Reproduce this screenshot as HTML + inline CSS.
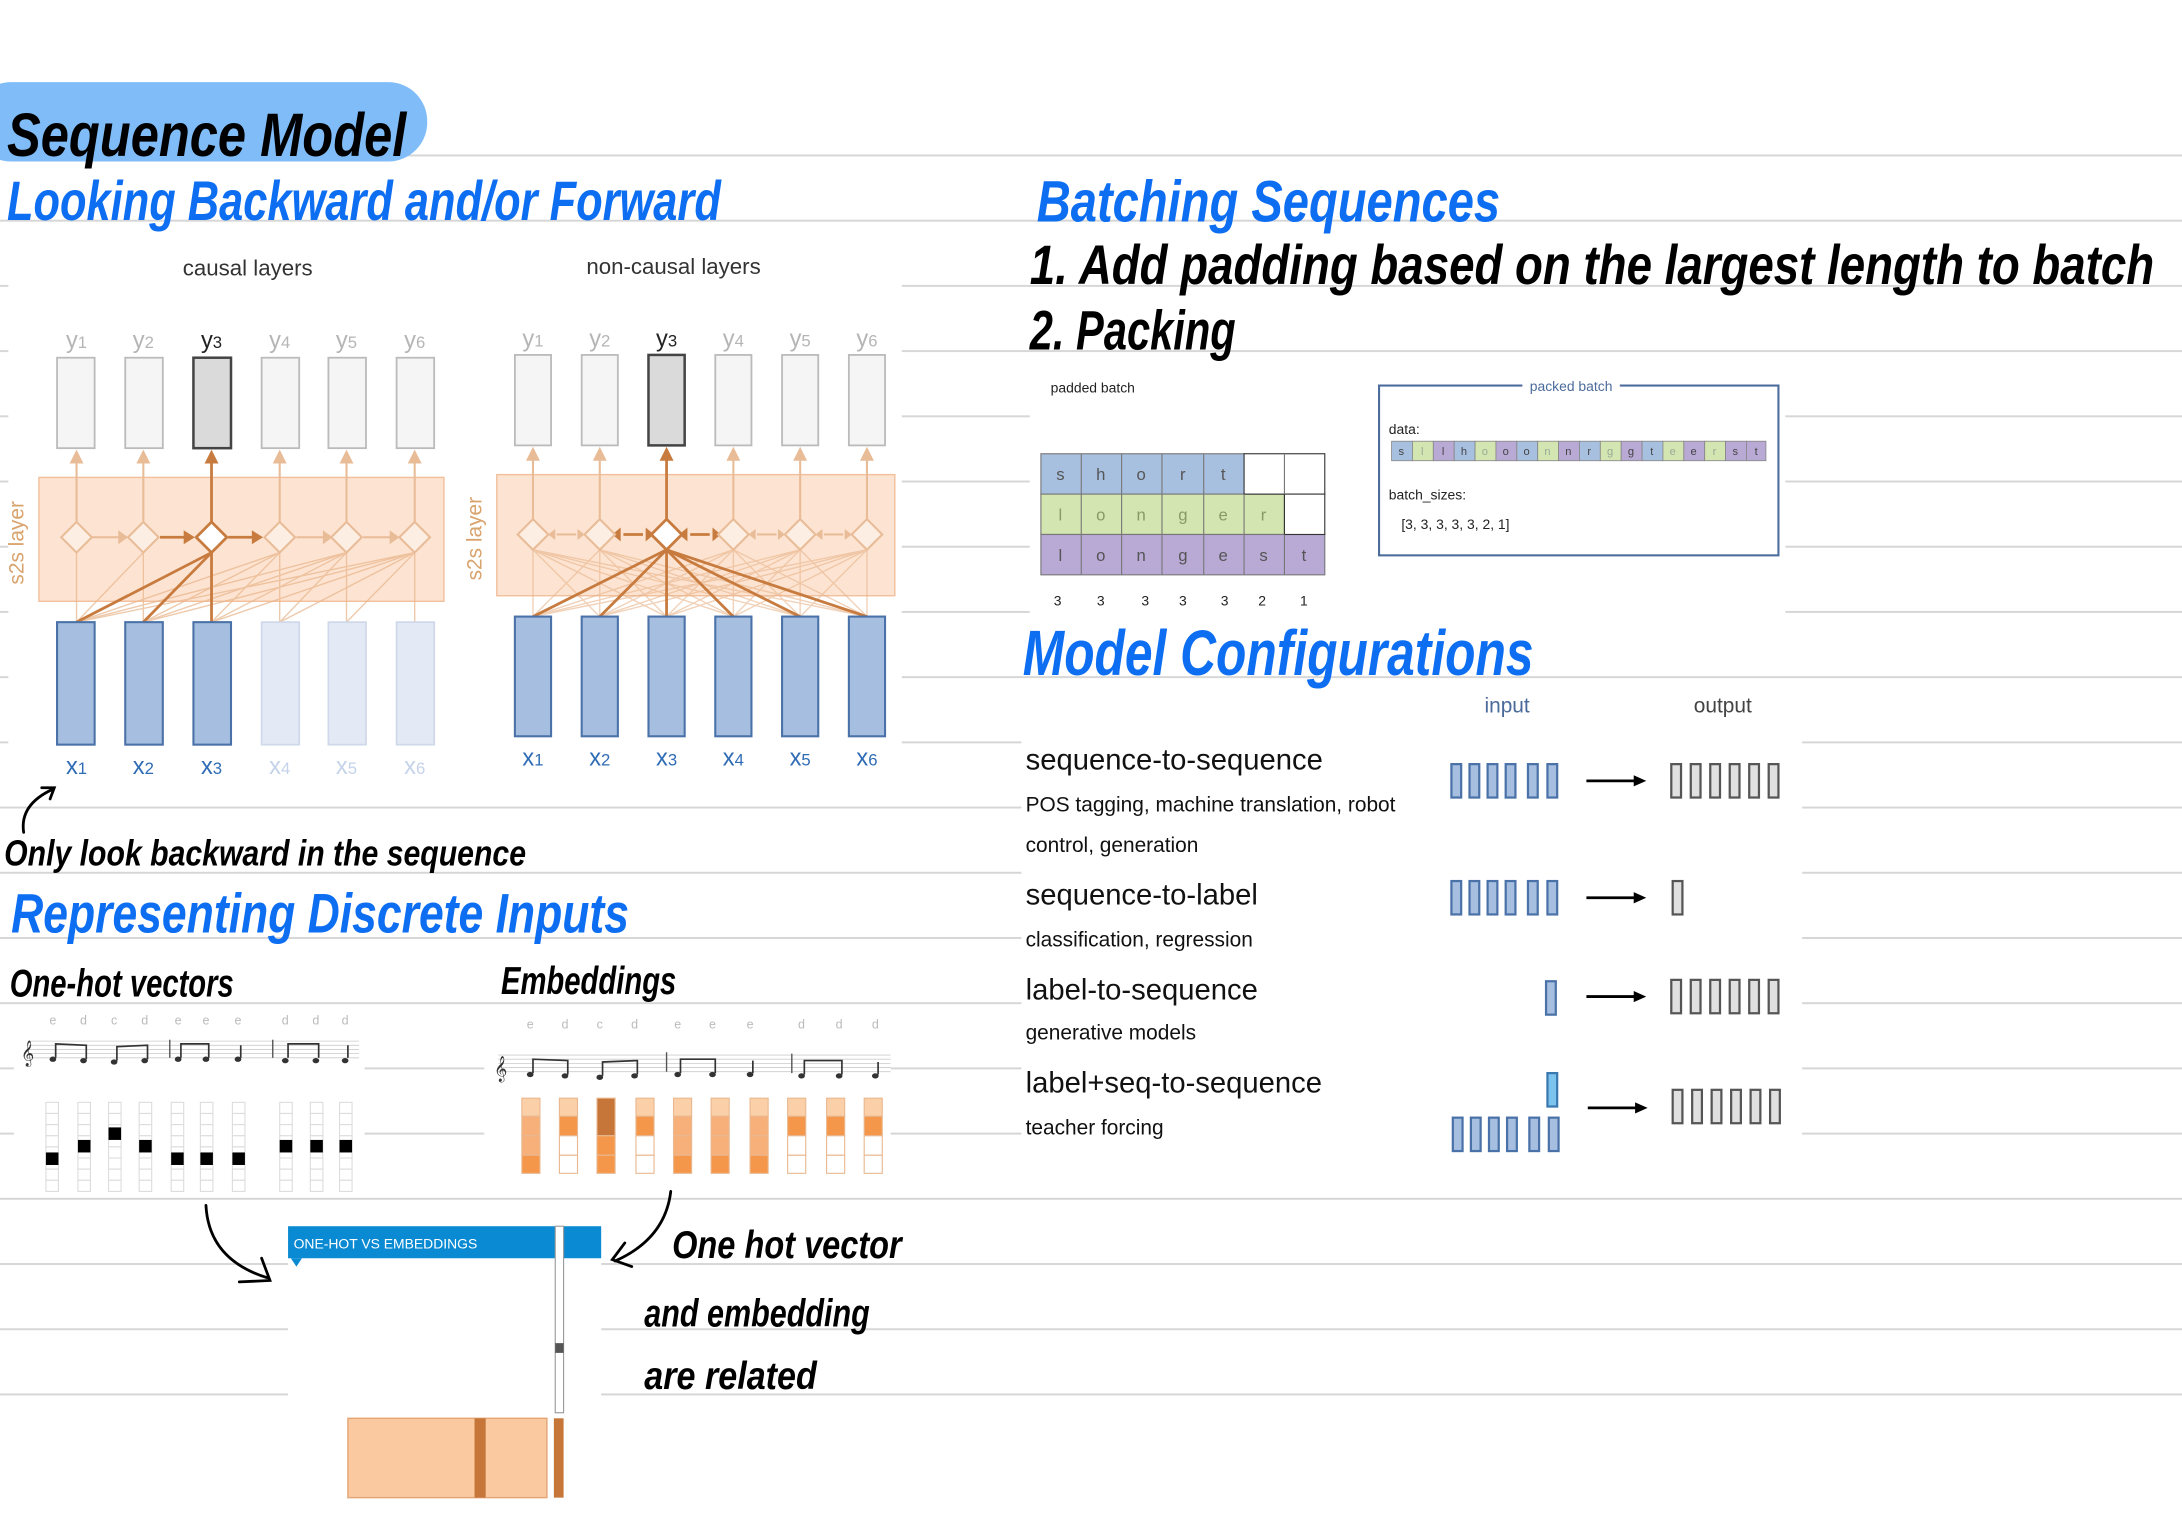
<!DOCTYPE html>
<html><head><meta charset="utf-8"><style>
html,body{margin:0;padding:0;background:#fff;}
svg{display:block}
.hw{font-family:"Liberation Sans",sans-serif;font-style:italic;font-weight:bold;}
.lab{font-family:"Liberation Sans",sans-serif;}
</style></head><body>
<svg width="2182" height="1538" viewBox="0 0 1568 1105" preserveAspectRatio="none" xmlns="http://www.w3.org/2000/svg">
<defs>
<pattern id="rules" x="0" y="111" width="1568" height="46.85" patternUnits="userSpaceOnUse">
<rect x="0" y="0" width="1568" height="1.4" fill="#d6d6d6"/>
</pattern>
</defs>
<rect width="1568" height="1105" fill="#fff"/>
<rect x="0" y="110" width="1568" height="900" fill="url(#rules)"/>
<rect x="6" y="172" width="642" height="400" fill="#fff"/>
<rect x="740" y="262" width="543" height="180" fill="#fff"/>
<rect x="734" y="522" width="561" height="312" fill="#fff"/>
<rect x="10" y="724" width="252" height="136" fill="#fff"/>
<rect x="348" y="724" width="292" height="132" fill="#fff"/>
<rect x="207" y="880" width="225" height="200" fill="#fff"/>

<rect x="-20" y="59" width="327" height="57" rx="28" fill="#80bdf8"/>
<text class="hw" x="5" y="112" font-size="44" textLength="287" lengthAdjust="spacingAndGlyphs" fill="#000">Sequence Model</text>
<text class="hw" x="5" y="158" font-size="40" textLength="513" lengthAdjust="spacingAndGlyphs" fill="#0d6ef2">Looking Backward and/or Forward</text>
<text class="hw" x="745" y="159" font-size="42" textLength="333" lengthAdjust="spacingAndGlyphs" fill="#0d6ef2">Batching Sequences</text>
<text class="hw" x="740" y="204" font-size="40" textLength="808" lengthAdjust="spacingAndGlyphs" fill="#000">1. Add padding based on the largest length to batch</text>
<text class="hw" x="740" y="251" font-size="40" textLength="148" lengthAdjust="spacingAndGlyphs" fill="#000">2. Packing</text>
<text class="hw" x="735" y="485" font-size="46" textLength="367" lengthAdjust="spacingAndGlyphs" fill="#0d6ef2">Model Configurations</text>
<text class="hw" x="3" y="622" font-size="26" textLength="375" lengthAdjust="spacingAndGlyphs" fill="#000" font-weight="normal">Only look backward in the sequence</text>
<text class="hw" x="8" y="670" font-size="40" textLength="444" lengthAdjust="spacingAndGlyphs" fill="#0d6ef2">Representing Discrete Inputs</text>
<text class="hw" x="7" y="716" font-size="28" textLength="161" lengthAdjust="spacingAndGlyphs" fill="#000" font-weight="normal">One-hot vectors</text>
<text class="hw" x="360" y="714" font-size="28" textLength="126" lengthAdjust="spacingAndGlyphs" fill="#000" font-weight="normal">Embeddings</text>
<text class="hw" x="483" y="904" font-size="28" textLength="165" lengthAdjust="spacingAndGlyphs" fill="#000" font-weight="normal">One hot vector</text>
<text class="hw" x="463" y="953" font-size="28" textLength="162" lengthAdjust="spacingAndGlyphs" fill="#000" font-weight="normal">and embedding</text>
<text class="hw" x="463" y="998" font-size="28" textLength="124" lengthAdjust="spacingAndGlyphs" fill="#000" font-weight="normal">are related</text>

<g fill="none" stroke="#000" stroke-width="2" stroke-linecap="round">
<path d="M17 598 Q14 578 38 567"/><path d="M30 566 L39 566 L36 574"/>
<path d="M148 866 Q150 905 192 918"/><path d="M172 921 L194 920 L188 904"/>
<path d="M482 856 Q478 890 442 906"/><path d="M449 893 L440 905 L454 910"/>
</g>

<text class="lab" x="178" y="198" font-size="16" text-anchor="middle" fill="#333">causal layers</text>
<rect x="28" y="343" width="291" height="89" fill="#fde4d2" stroke="#f2bf9a"/>
<text class="lab" font-size="15" fill="#d9a36d" transform="translate(17,420) rotate(-90)">s2s layer</text>
<g font-family="Liberation Sans" font-size="17" text-anchor="middle" fill="#b5b5b5">
<text x="55" y="250">y<tspan font-size="12">1</tspan></text><text x="103" y="250">y<tspan font-size="12">2</tspan></text><text x="152" y="250" fill="#222">y<tspan font-size="12">3</tspan></text><text x="201" y="250">y<tspan font-size="12">4</tspan></text><text x="249" y="250">y<tspan font-size="12">5</tspan></text><text x="298" y="250">y<tspan font-size="12">6</tspan></text>
</g>
<g fill="#f5f5f5" stroke="#bbb" stroke-width="1.3">
<rect x="41" y="257" width="27" height="65"/><rect x="90" y="257" width="27" height="65"/><rect x="139" y="257" width="27" height="65" fill="#dadada" stroke="#444" stroke-width="1.8"/><rect x="188" y="257" width="27" height="65"/><rect x="236" y="257" width="27" height="65"/><rect x="285" y="257" width="27" height="65"/>
</g>
<g stroke="#e8b48a" stroke-width="1" opacity="0.7">
<line x1="55" y1="447" x2="103" y2="397"/><line x1="55" y1="447" x2="201" y2="397"/><line x1="55" y1="447" x2="249" y2="397"/><line x1="55" y1="447" x2="298" y2="397"/>
<line x1="103" y1="447" x2="201" y2="397"/><line x1="103" y1="447" x2="249" y2="397"/><line x1="103" y1="447" x2="298" y2="397"/>
<line x1="152" y1="447" x2="201" y2="397"/><line x1="152" y1="447" x2="249" y2="397"/><line x1="152" y1="447" x2="298" y2="397"/>
<line x1="201" y1="447" x2="249" y2="397"/><line x1="201" y1="447" x2="298" y2="397"/><line x1="249" y1="447" x2="298" y2="397"/>
<line x1="55" y1="447" x2="55" y2="397"/><line x1="103" y1="447" x2="103" y2="397"/><line x1="201" y1="447" x2="201" y2="397"/><line x1="249" y1="447" x2="249" y2="397"/><line x1="298" y1="447" x2="298" y2="397"/>
</g>
<g stroke="#c87b3e" stroke-width="2">
<line x1="55" y1="447" x2="152" y2="397"/><line x1="103" y1="447" x2="152" y2="397"/><line x1="152" y1="447" x2="152" y2="397"/>
<line x1="152" y1="375" x2="152" y2="330"/>
</g>
<path d="M147 333 L152 323 L157 333Z" fill="#c87b3e"/>
<g stroke="#e9bc98" stroke-width="1.5">
<line x1="55" y1="375" x2="55" y2="330"/><line x1="103" y1="375" x2="103" y2="330"/><line x1="201" y1="375" x2="201" y2="330"/><line x1="249" y1="375" x2="249" y2="330"/><line x1="298" y1="375" x2="298" y2="330"/>
<line x1="66" y1="386" x2="88" y2="386"/><line x1="213" y1="386" x2="235" y2="386"/><line x1="261" y1="386" x2="283" y2="386"/>
</g>
<g fill="#e9bc98"><path d="M50 333 L55 323 L60 333Z"/><path d="M98 333 L103 323 L108 333Z"/><path d="M196 333 L201 323 L206 333Z"/><path d="M244 333 L249 323 L254 333Z"/><path d="M293 333 L298 323 L303 333Z"/>
<path d="M85 381 L92 386 L85 391Z"/><path d="M232 381 L239 386 L232 391Z"/><path d="M280 381 L287 386 L280 391Z"/></g>
<g stroke="#c87b3e" stroke-width="2"><line x1="115" y1="386" x2="135" y2="386"/><line x1="164" y1="386" x2="184" y2="386"/></g>
<g fill="#c87b3e"><path d="M132 381 L140 386 L132 391Z"/><path d="M181 381 L189 386 L181 391Z"/></g>
<g fill="#fdeee3" stroke="#e9bc98" stroke-width="1.5">
<path d="M55 375 L66 386 L55 397 L44 386Z"/><path d="M103 375 L114 386 L103 397 L92 386Z"/><path d="M201 375 L212 386 L201 397 L190 386Z"/><path d="M249 375 L260 386 L249 397 L238 386Z"/><path d="M298 375 L309 386 L298 397 L287 386Z"/>
</g>
<path d="M152 375 L163 386 L152 397 L141 386Z" fill="#fff" stroke="#c87b3e" stroke-width="2"/>
<g fill="#a6bfe0" stroke="#4a72a8" stroke-width="1.5">
<rect x="41" y="447" width="27" height="88"/><rect x="90" y="447" width="27" height="88"/><rect x="139" y="447" width="27" height="88"/>
</g>
<g fill="#e4eaf5" stroke="#d0d9ea" stroke-width="1.3">
<rect x="188" y="447" width="27" height="88"/><rect x="236" y="447" width="27" height="88"/><rect x="285" y="447" width="27" height="88"/>
</g>
<g font-family="Liberation Sans" font-size="17" text-anchor="middle" fill="#2f6cb5">
<text x="55" y="556">x<tspan font-size="12">1</tspan></text><text x="103" y="556">x<tspan font-size="12">2</tspan></text><text x="152" y="556">x<tspan font-size="12">3</tspan></text><text x="201" y="556" fill="#c4d3ea">x<tspan font-size="12">4</tspan></text><text x="249" y="556" fill="#c4d3ea">x<tspan font-size="12">5</tspan></text><text x="298" y="556" fill="#c4d3ea">x<tspan font-size="12">6</tspan></text>
</g>

<text class="lab" x="484" y="197" font-size="16" text-anchor="middle" fill="#333">non-causal layers</text>
<rect x="357" y="341" width="286" height="87" fill="#fde4d2" stroke="#f2bf9a"/>
<text class="lab" font-size="15" fill="#d9a36d" transform="translate(346,417) rotate(-90)">s2s layer</text>
<g font-family="Liberation Sans" font-size="17" text-anchor="middle" fill="#b5b5b5">
<text x="383" y="249">y<tspan font-size="12">1</tspan></text><text x="431" y="249">y<tspan font-size="12">2</tspan></text><text x="479" y="249" fill="#222">y<tspan font-size="12">3</tspan></text><text x="527" y="249">y<tspan font-size="12">4</tspan></text><text x="575" y="249">y<tspan font-size="12">5</tspan></text><text x="623" y="249">y<tspan font-size="12">6</tspan></text>
</g>
<g fill="#f5f5f5" stroke="#bbb" stroke-width="1.3">
<rect x="370" y="255" width="26" height="65"/><rect x="418" y="255" width="26" height="65"/><rect x="466" y="255" width="26" height="65" fill="#dadada" stroke="#444" stroke-width="1.8"/><rect x="514" y="255" width="26" height="65"/><rect x="562" y="255" width="26" height="65"/><rect x="610" y="255" width="26" height="65"/>
</g>
<g stroke="#e8b48a" stroke-width="1" opacity="0.6">
<line x1="383" y1="443" x2="431" y2="395"/><line x1="383" y1="443" x2="527" y2="395"/><line x1="383" y1="443" x2="575" y2="395"/><line x1="383" y1="443" x2="623" y2="395"/><line x1="383" y1="443" x2="383" y2="395"/>
<line x1="431" y1="443" x2="383" y2="395"/><line x1="431" y1="443" x2="527" y2="395"/><line x1="431" y1="443" x2="575" y2="395"/><line x1="431" y1="443" x2="623" y2="395"/><line x1="431" y1="443" x2="431" y2="395"/>
<line x1="479" y1="443" x2="383" y2="395"/><line x1="479" y1="443" x2="431" y2="395"/><line x1="479" y1="443" x2="527" y2="395"/><line x1="479" y1="443" x2="575" y2="395"/><line x1="479" y1="443" x2="623" y2="395"/>
<line x1="527" y1="443" x2="383" y2="395"/><line x1="527" y1="443" x2="431" y2="395"/><line x1="527" y1="443" x2="575" y2="395"/><line x1="527" y1="443" x2="623" y2="395"/><line x1="527" y1="443" x2="527" y2="395"/>
<line x1="575" y1="443" x2="383" y2="395"/><line x1="575" y1="443" x2="431" y2="395"/><line x1="575" y1="443" x2="527" y2="395"/><line x1="575" y1="443" x2="623" y2="395"/><line x1="575" y1="443" x2="575" y2="395"/>
<line x1="623" y1="443" x2="383" y2="395"/><line x1="623" y1="443" x2="431" y2="395"/><line x1="623" y1="443" x2="527" y2="395"/><line x1="623" y1="443" x2="575" y2="395"/><line x1="623" y1="443" x2="623" y2="395"/>
</g>
<g stroke="#c87b3e" stroke-width="2">
<line x1="383" y1="443" x2="479" y2="395"/><line x1="431" y1="443" x2="479" y2="395"/><line x1="479" y1="443" x2="479" y2="395"/><line x1="527" y1="443" x2="479" y2="395"/><line x1="575" y1="443" x2="479" y2="395"/><line x1="623" y1="443" x2="479" y2="395"/>
<line x1="479" y1="373" x2="479" y2="330"/>
<line x1="448" y1="384" x2="462" y2="384"/><line x1="496" y1="384" x2="510" y2="384"/>
</g>
<g fill="#c87b3e"><path d="M474 331 L479 321 L484 331Z"/>
<path d="M446 379 L440 384 L446 389Z"/><path d="M464 379 L470 384 L464 389Z"/><path d="M494 379 L488 384 L494 389Z"/><path d="M512 379 L518 384 L512 389Z"/></g>
<g stroke="#e9bc98" stroke-width="1.5">
<line x1="383" y1="373" x2="383" y2="330"/><line x1="431" y1="373" x2="431" y2="330"/><line x1="527" y1="373" x2="527" y2="330"/><line x1="575" y1="373" x2="575" y2="330"/><line x1="623" y1="373" x2="623" y2="330"/>
<line x1="400" y1="384" x2="414" y2="384"/><line x1="544" y1="384" x2="558" y2="384"/><line x1="592" y1="384" x2="606" y2="384"/>
</g>
<g fill="#e9bc98"><path d="M378 331 L383 321 L388 331Z"/><path d="M426 331 L431 321 L436 331Z"/><path d="M522 331 L527 321 L532 331Z"/><path d="M570 331 L575 321 L580 331Z"/><path d="M618 331 L623 321 L628 331Z"/>
<path d="M399 380 L394 384 L399 388Z"/><path d="M415 380 L420 384 L415 388Z"/><path d="M543 380 L538 384 L543 388Z"/><path d="M559 380 L564 384 L559 388Z"/><path d="M591 380 L586 384 L591 388Z"/><path d="M607 380 L612 384 L607 388Z"/></g>
<g fill="#fdeee3" stroke="#e9bc98" stroke-width="1.5">
<path d="M383 373 L394 384 L383 395 L372 384Z"/><path d="M431 373 L442 384 L431 395 L420 384Z"/><path d="M527 373 L538 384 L527 395 L516 384Z"/><path d="M575 373 L586 384 L575 395 L564 384Z"/><path d="M623 373 L634 384 L623 395 L612 384Z"/>
</g>
<path d="M479 373 L490 384 L479 395 L468 384Z" fill="#fff" stroke="#c87b3e" stroke-width="2"/>
<g fill="#a6bfe0" stroke="#4a72a8" stroke-width="1.5">
<rect x="370" y="443" width="26" height="86"/><rect x="418" y="443" width="26" height="86"/><rect x="466" y="443" width="26" height="86"/><rect x="514" y="443" width="26" height="86"/><rect x="562" y="443" width="26" height="86"/><rect x="610" y="443" width="26" height="86"/>
</g>
<g font-family="Liberation Sans" font-size="17" text-anchor="middle" fill="#2f6cb5">
<text x="383" y="550">x<tspan font-size="12">1</tspan></text><text x="431" y="550">x<tspan font-size="12">2</tspan></text><text x="479" y="550">x<tspan font-size="12">3</tspan></text><text x="527" y="550">x<tspan font-size="12">4</tspan></text><text x="575" y="550">x<tspan font-size="12">5</tspan></text><text x="623" y="550">x<tspan font-size="12">6</tspan></text>
</g>

<text class="lab" x="755" y="282" font-size="10" fill="#222">padded batch</text>
<g stroke="#777" stroke-width="0.8">
<rect x="748" y="326" width="146" height="29" fill="#a8c0e0"/>
<rect x="748" y="355" width="175" height="29" fill="#d3e5b0"/>
<rect x="748" y="384" width="204" height="29" fill="#b9a9d5"/>
<rect x="894" y="326" width="58" height="29" fill="#fff" stroke="#333"/>
<rect x="923" y="355" width="29" height="29" fill="#fff" stroke="#333"/>
<line x1="777" y1="326" x2="777" y2="413"/><line x1="806" y1="326" x2="806" y2="413"/><line x1="835" y1="326" x2="835" y2="413"/><line x1="865" y1="326" x2="865" y2="413"/><line x1="894" y1="355" x2="894" y2="413"/><line x1="923" y1="326" x2="923" y2="355"/><line x1="923" y1="384" x2="923" y2="413"/>
</g>
<g font-family="Liberation Sans" font-size="12" text-anchor="middle" fill="#555">
<text x="762" y="345">s</text><text x="791" y="345">h</text><text x="820" y="345">o</text><text x="850" y="345">r</text><text x="879" y="345">t</text>
<text x="762" y="374" fill="#889a66">l</text><text x="791" y="374" fill="#889a66">o</text><text x="820" y="374" fill="#889a66">n</text><text x="850" y="374" fill="#889a66">g</text><text x="879" y="374" fill="#889a66">e</text><text x="908" y="374" fill="#889a66">r</text>
<text x="762" y="403">l</text><text x="791" y="403">o</text><text x="820" y="403">n</text><text x="850" y="403">g</text><text x="879" y="403">e</text><text x="908" y="403">s</text><text x="937" y="403">t</text>
</g>
<g font-family="Liberation Sans" font-size="10" text-anchor="middle" fill="#222">
<text x="760" y="435">3</text><text x="791" y="435">3</text><text x="823" y="435">3</text><text x="850" y="435">3</text><text x="880" y="435">3</text><text x="907" y="435">2</text><text x="937" y="435">1</text>
</g>
<rect x="991" y="277" width="287" height="122" fill="#fff" stroke="#4c6c9c" stroke-width="1.5"/>
<rect x="1094" y="271" width="70" height="12" fill="#fff"/>
<text class="lab" x="1129" y="281" font-size="10" text-anchor="middle" fill="#4c6c9c">packed batch</text>
<text class="lab" x="998" y="312" font-size="10" fill="#222">data:</text>
<g stroke="#888" stroke-width="0.6">
<rect x="1000" y="317" width="15" height="14" fill="#a8c0e0"/><rect x="1015" y="317" width="15" height="14" fill="#d3e5b0"/><rect x="1030" y="317" width="15" height="14" fill="#b9a9d5"/>
<rect x="1045" y="317" width="15" height="14" fill="#a8c0e0"/><rect x="1060" y="317" width="15" height="14" fill="#d3e5b0"/><rect x="1075" y="317" width="15" height="14" fill="#b9a9d5"/>
<rect x="1090" y="317" width="15" height="14" fill="#a8c0e0"/><rect x="1105" y="317" width="15" height="14" fill="#d3e5b0"/><rect x="1120" y="317" width="15" height="14" fill="#b9a9d5"/>
<rect x="1135" y="317" width="15" height="14" fill="#a8c0e0"/><rect x="1150" y="317" width="15" height="14" fill="#d3e5b0"/><rect x="1165" y="317" width="15" height="14" fill="#b9a9d5"/>
<rect x="1180" y="317" width="15" height="14" fill="#a8c0e0"/><rect x="1195" y="317" width="15" height="14" fill="#d3e5b0"/><rect x="1210" y="317" width="15" height="14" fill="#b9a9d5"/>
<rect x="1225" y="317" width="15" height="14" fill="#d3e5b0"/><rect x="1240" y="317" width="15" height="14" fill="#b9a9d5"/><rect x="1255" y="317" width="14" height="14" fill="#b9a9d5"/>
</g>
<g font-family="Liberation Sans" font-size="8" text-anchor="middle" fill="#444">
<text x="1007" y="327">s</text><text x="1022" y="327" fill="#9a9">l</text><text x="1037" y="327">l</text><text x="1052" y="327">h</text><text x="1067" y="327" fill="#9a9">o</text><text x="1082" y="327">o</text><text x="1097" y="327">o</text><text x="1112" y="327" fill="#9a9">n</text><text x="1127" y="327">n</text><text x="1142" y="327">r</text><text x="1157" y="327" fill="#9a9">g</text><text x="1172" y="327">g</text><text x="1187" y="327">t</text><text x="1202" y="327" fill="#9a9">e</text><text x="1217" y="327">e</text><text x="1232" y="327" fill="#9a9">r</text><text x="1247" y="327">s</text><text x="1262" y="327">t</text>
</g>
<text class="lab" x="998" y="359" font-size="10" fill="#222">batch_sizes:</text>
<text class="lab" x="1007" y="380" font-size="10" fill="#222">[3, 3, 3, 3, 3, 2, 1]</text>

<text class="lab" x="1083" y="512" font-size="15" text-anchor="middle" fill="#4a6a9a">input</text>
<text class="lab" x="1238" y="512" font-size="15" text-anchor="middle" fill="#444">output</text>
<g class="lab" fill="#111">
<text x="737" y="553" font-size="21">sequence-to-sequence</text>
<text x="737" y="583" font-size="15">POS tagging, machine translation, robot</text>
<text x="737" y="612" font-size="15">control, generation</text>
<text x="737" y="650" font-size="21">sequence-to-label</text>
<text x="737" y="680" font-size="15">classification, regression</text>
<text x="737" y="718" font-size="21">label-to-sequence</text>
<text x="737" y="747" font-size="15">generative models</text>
<text x="737" y="785" font-size="21">label+seq-to-sequence</text>
<text x="737" y="815" font-size="15">teacher forcing</text>
</g>
<g id="blue6" fill="#a6bfe0" stroke="#4a72a8" stroke-width="1.6">
<rect x="1043" y="549" width="7" height="24"/><rect x="1056" y="549" width="7" height="24"/><rect x="1069" y="549" width="7" height="24"/><rect x="1082" y="549" width="7" height="24"/><rect x="1098" y="549" width="7" height="24"/><rect x="1112" y="549" width="7" height="24"/>
</g>
<use href="#blue6" y="84"/>
<use href="#blue6" x="1" y="254"/>
<g id="gray6" fill="#e0e0e0" stroke="#555" stroke-width="1.6">
<rect x="1201" y="549" width="7" height="24"/><rect x="1215" y="549" width="7" height="24"/><rect x="1229" y="549" width="7" height="24"/><rect x="1243" y="549" width="7" height="24"/><rect x="1257" y="549" width="7" height="24"/><rect x="1271" y="549" width="7" height="24"/>
</g>
<use href="#gray6" y="155"/>
<use href="#gray6" x="1" y="234"/>
<rect x="1202" y="633" width="7" height="24" fill="#e0e0e0" stroke="#555" stroke-width="1.6"/>
<rect x="1111" y="705" width="7" height="24" fill="#a6bfe0" stroke="#4a72a8" stroke-width="1.6"/>
<rect x="1112" y="771" width="7" height="24" fill="#7cc4ee" stroke="#3a78b0" stroke-width="1.6"/>
<g stroke="#000" stroke-width="2">
<line x1="1140" y1="561" x2="1176" y2="561"/><line x1="1140" y1="645" x2="1176" y2="645"/><line x1="1140" y1="716" x2="1176" y2="716"/><line x1="1141" y1="796" x2="1177" y2="796"/>
</g>
<g fill="#000"><path d="M1174 557 L1183 561 L1174 565Z"/><path d="M1174 641 L1183 645 L1174 649Z"/><path d="M1174 712 L1183 716 L1174 720Z"/><path d="M1175 792 L1184 796 L1175 800Z"/></g>

<!-- MUSIC -->
<g font-family="Liberation Sans" font-size="9" fill="#bbb" text-anchor="middle">
<text x="38" y="736">e</text><text x="60" y="736">d</text><text x="82" y="736">c</text><text x="104" y="736">d</text><text x="128" y="736">e</text><text x="148" y="736">e</text><text x="171" y="736">e</text><text x="205" y="736">d</text><text x="227" y="736">d</text><text x="248" y="736">d</text>
<text x="381" y="739">e</text><text x="406" y="739">d</text><text x="431" y="739">c</text><text x="456" y="739">d</text><text x="487" y="739">e</text><text x="512" y="739">e</text><text x="539" y="739">e</text><text x="576" y="739">d</text><text x="603" y="739">d</text><text x="629" y="739">d</text>
</g>
<g stroke="#ccc" stroke-width="0.6">
<line x1="20" y1="748" x2="258" y2="748"/><line x1="20" y1="751" x2="258" y2="751"/><line x1="20" y1="754" x2="258" y2="754"/><line x1="20" y1="757" x2="258" y2="757"/><line x1="20" y1="760" x2="258" y2="760"/>
<line x1="358" y1="758" x2="640" y2="758"/><line x1="358" y1="761" x2="640" y2="761"/><line x1="358" y1="764" x2="640" y2="764"/><line x1="358" y1="767" x2="640" y2="767"/><line x1="358" y1="770" x2="640" y2="770"/>
</g>
<text x="15" y="762" font-size="16" fill="#333" font-family="DejaVu Sans">𝄞</text>
<text x="355" y="773" font-size="16" fill="#333" font-family="DejaVu Sans">𝄞</text>
<g stroke="#333" stroke-width="1.2" fill="none">
<path d="M40 760 V750 L62 751 V761"/><path d="M84 762 V752 L106 751 V761"/><path d="M130 760 V750 L150 750 V760"/><path d="M173 760 V751"/><path d="M207 760 V750 L229 750 V760"/><path d="M250 760 V751"/>
</g>
<g stroke="#555" stroke-width="1"><line x1="122" y1="747" x2="122" y2="760"/><line x1="196" y1="747" x2="196" y2="760"/></g>
<g fill="#333">
<ellipse cx="38" cy="761" rx="2.4" ry="1.9"/><ellipse cx="60" cy="762" rx="2.4" ry="1.9"/><ellipse cx="82" cy="763" rx="2.4" ry="1.9"/><ellipse cx="104" cy="762" rx="2.4" ry="1.9"/><ellipse cx="128" cy="761" rx="2.4" ry="1.9"/><ellipse cx="148" cy="761" rx="2.4" ry="1.9"/><ellipse cx="171" cy="761" rx="2.4" ry="1.9"/><ellipse cx="205" cy="762" rx="2.4" ry="1.9"/><ellipse cx="227" cy="762" rx="2.4" ry="1.9"/><ellipse cx="248" cy="762" rx="2.4" ry="1.9"/>
</g>
<g stroke="#333" stroke-width="1.2" fill="none">
<path d="M383 771 V761 L408 762 V772"/><path d="M433 773 V763 L458 762 V772"/><path d="M489 771 V761 L514 761 V771"/><path d="M541 771 V762"/><path d="M578 772 V762 L605 762 V772"/><path d="M631 772 V763"/>
</g>
<g stroke="#555" stroke-width="1"><line x1="479" y1="756" x2="479" y2="770"/><line x1="569" y1="757" x2="569" y2="771"/></g>
<g fill="#333">
<ellipse cx="381" cy="772" rx="2.4" ry="1.9"/><ellipse cx="406" cy="773" rx="2.4" ry="1.9"/><ellipse cx="431" cy="774" rx="2.4" ry="1.9"/><ellipse cx="456" cy="773" rx="2.4" ry="1.9"/><ellipse cx="487" cy="772" rx="2.4" ry="1.9"/><ellipse cx="512" cy="772" rx="2.4" ry="1.9"/><ellipse cx="539" cy="772" rx="2.4" ry="1.9"/><ellipse cx="576" cy="773" rx="2.4" ry="1.9"/><ellipse cx="603" cy="773" rx="2.4" ry="1.9"/><ellipse cx="629" cy="773" rx="2.4" ry="1.9"/>
</g>

<g id="ohcol" fill="#fff" stroke="#ddd" stroke-width="0.8">
<rect x="33" y="792" width="9" height="8"/><rect x="33" y="800" width="9" height="8"/><rect x="33" y="808" width="9" height="8"/><rect x="33" y="816" width="9" height="8"/><rect x="33" y="824" width="9" height="8"/><rect x="33" y="832" width="9" height="8"/><rect x="33" y="840" width="9" height="8"/><rect x="33" y="848" width="9" height="8"/>
</g>
<use href="#ohcol" x="23"/><use href="#ohcol" x="45"/><use href="#ohcol" x="67"/><use href="#ohcol" x="90"/><use href="#ohcol" x="111"/><use href="#ohcol" x="134"/><use href="#ohcol" x="168"/><use href="#ohcol" x="190"/><use href="#ohcol" x="211"/>
<g fill="#000">
<rect x="33" y="828" width="9" height="9"/><rect x="56" y="819" width="9" height="9"/><rect x="78" y="810" width="9" height="9"/><rect x="100" y="819" width="9" height="9"/><rect x="123" y="828" width="9" height="9"/><rect x="144" y="828" width="9" height="9"/><rect x="167" y="828" width="9" height="9"/><rect x="201" y="819" width="9" height="9"/><rect x="223" y="819" width="9" height="9"/><rect x="244" y="819" width="9" height="9"/>
</g>
<g id="embE" stroke="#e9b890" stroke-width="0.8">
<rect x="375" y="789" width="13" height="13" fill="#fbd0a8"/><rect x="375" y="802" width="13" height="14" fill="#f7b07a"/><rect x="375" y="816" width="13" height="14" fill="#f7b07a"/><rect x="375" y="830" width="13" height="13" fill="#f4974a"/>
</g>
<g id="embD" stroke="#e9b890" stroke-width="0.8">
<rect x="402" y="789" width="13" height="13" fill="#fbd0a8"/><rect x="402" y="802" width="13" height="14" fill="#f4974a"/><rect x="402" y="816" width="13" height="14" fill="#fff"/><rect x="402" y="830" width="13" height="13" fill="#fff"/>
</g>
<g stroke="#e9b890" stroke-width="0.8">
<rect x="429" y="789" width="13" height="27" fill="#c57638"/><rect x="429" y="816" width="13" height="14" fill="#f4974a"/><rect x="429" y="830" width="13" height="13" fill="#f4974a"/>
</g>
<use href="#embD" x="55"/><use href="#embE" x="109"/><use href="#embE" x="136"/><use href="#embE" x="164"/><use href="#embD" x="164"/><use href="#embD" x="192"/><use href="#embD" x="219"/>

<rect x="207" y="881" width="192" height="23" fill="#0a8ad2"/>
<path d="M209 904 L213 910 L217 904Z" fill="#0a8ad2"/>
<rect x="404" y="881" width="28" height="23" fill="#0a8ad2"/>
<text class="lab" x="211" y="897" font-size="10" fill="#fff">ONE-HOT VS EMBEDDINGS</text>
<rect x="399" y="881" width="6" height="134" fill="#fff" stroke="#999" stroke-width="0.8"/>
<rect x="399" y="965" width="6" height="7" fill="#555"/>
<rect x="250" y="1019" width="143" height="57" fill="#fac9a0" stroke="#e3a574"/>
<rect x="341" y="1019" width="8" height="57" fill="#c57638"/>
<rect x="398" y="1019" width="7" height="57" fill="#c57638"/>
</svg>
</body></html>
